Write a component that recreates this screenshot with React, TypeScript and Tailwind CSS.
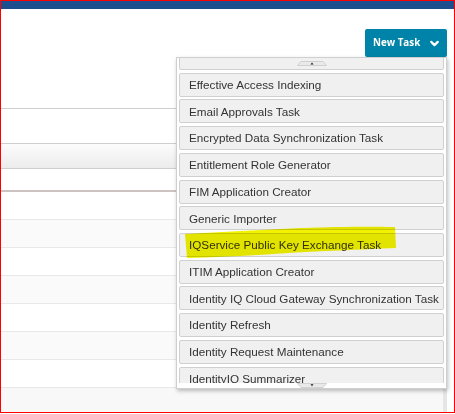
import { ChevronDown } from "lucide-react";

const tasks = [
  "Effective Access Indexing",
  "Email Approvals Task",
  "Encrypted Data Synchronization Task",
  "Entitlement Role Generator",
  "FIM Application Creator",
  "Generic Importer",
  "IQService Public Key Exchange Task",
  "ITIM Application Creator",
  "Identity IQ Cloud Gateway Synchronization Task",
  "Identity Refresh",
  "Identity Request Maintenance",
  "IdentityIQ Summarizer",
];

function ScrollTab({ down }: { down?: boolean }) {
  return (
    <div className="flex justify-center">
      <svg width="30" height="5" viewBox="0 0 30 5">
        {down ? (
          <>
            <path d="M0.5 0.5 H29.5 L26 4.5 H4 Z" fill="#e9e9e9" stroke="#c8c8c8" strokeWidth="0.8" />
            <path d="M13.5 1.2 H16.5 L15 3.2 Z" fill="#222" />
          </>
        ) : (
          <>
            <path d="M4 0.5 H26 L29.5 4.5 H0.5 Z" fill="#e9e9e9" stroke="#c8c8c8" strokeWidth="0.8" />
            <path d="M15 1.6 L16.5 3.6 H13.5 Z" fill="#222" />
          </>
        )}
      </svg>
    </div>
  );
}

function TaskItem({ label }: { label: string }) {
  return (
    <div className="h-[24px] shrink-0 flex items-center pl-[9px] rounded-[2px] border border-[#d0d0d0] bg-[#f0f0f0] text-[11.7px] text-[#333] whitespace-nowrap">
      {label}
    </div>
  );
}

export default function App() {
  return (
    <div
      className="relative w-[455px] h-[413px] border border-[#ff0000] bg-white overflow-hidden"
      style={{ fontFamily: '"Liberation Sans", Arial, sans-serif' }}
    >
      <div className="h-[8px] bg-[#1d4e8d]" />

      {/* header with button */}
      <div className="h-[99px] flex justify-end items-start pt-[20px] pr-[7px]">
        <button
          type="button"
          className="w-[82px] h-[28px] rounded-[2px] bg-[#0083a8] text-white flex items-center pl-[8px] gap-[8px] text-[9.8px] font-bold whitespace-nowrap"
          style={{ fontFamily: '"Open Sans", sans-serif' }}
        >
          New Task
          <ChevronDown size={13} strokeWidth={4} className="shrink-0" />
        </button>
      </div>

      {/* table behind the dropdown */}
      <div className="mr-[7px] flex">
        <div className="flex-1 flex flex-col">
          <div className="h-px bg-[#cfcfcf]" />
          <div className="h-[34px]" />
          <div className="h-px bg-[#cfcfcf]" />
          <div className="h-[24px] bg-gradient-to-b from-[#fcfcfc] to-[#ececec]" />
          <div className="h-px bg-[#cfcfcf]" />
          <div className="h-[21px]" />
          <div className="h-[2px] bg-[#cdc3c3]" />
          {[0, 1, 2, 3, 4, 5, 6].map((i) => (
            <div
              key={i}
              className={`h-[28px] border-b border-[#e8e8e8] ${i % 2 === 1 ? "bg-[#fafafa]" : "bg-white"}`}
            />
          ))}
          <div className="h-[30px] bg-[#f8f8f8]" />
        </div>
        <div className="w-[4px] bg-[#e6e6e6]" />
      </div>

      {/* dropdown menu */}
      <div className="absolute left-[175px] top-[56px] w-[271px] h-[332px] bg-white border border-[#cfcfcf] shadow-[1px_2px_4px_rgba(0,0,0,0.25)] flex flex-col">
        <div className="relative h-[326px] overflow-hidden">
          <div className="flex flex-col gap-[2.73px] px-[2px] mt-[-12px]">
            <TaskItem label="" />
            {tasks.map((t) => (
              <TaskItem key={t} label={t} />
            ))}
          </div>
          <div className="absolute left-0 right-0 top-[3px]">
            <ScrollTab />
          </div>
        </div>
        <div>
          <ScrollTab down />
        </div>
      </div>

      {/* yellow highlighter mark */}
      <svg
        className="absolute left-0 top-0 mix-blend-multiply pointer-events-none"
        width="455"
        height="414"
        viewBox="0 0 455 414"
      >
        <path
          d="M184 233 C 220 231, 260 229, 300 227 C 340 225.5, 370 225.5, 394 226 L 395 247 C 360 248.5, 320 250, 280 252.5 C 240 255, 210 256.5, 186 257 Z"
          fill="#f2f200"
        />
      </svg>
    </div>
  );
}
